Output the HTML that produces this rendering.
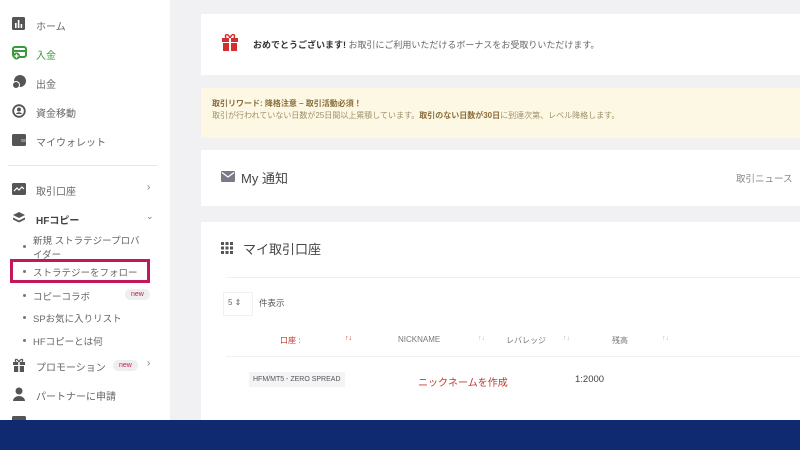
<!DOCTYPE html>
<html><head><meta charset="utf-8"><style>
*{margin:0;padding:0;box-sizing:border-box}
body{width:800px;height:450px;overflow:hidden;background:#f1f1f3;font-family:"Liberation Sans","Noto Sans CJK JP",sans-serif;position:relative;color:#555}
.a{position:absolute;white-space:nowrap}
#side{position:absolute;left:0;top:0;width:170px;height:450px;background:#fff}
.it{position:absolute;left:36px;font-size:10px;color:#666}
.ic{position:absolute;left:12px}
.sub{position:absolute;left:33px;font-size:9.5px;color:#666}
.dot{position:absolute;left:23px;width:3px;height:3px;border-radius:50%;background:#777}
.card{position:absolute;left:201px;right:0;background:#fff}
.badge{position:absolute;font-size:7px;color:#c2185b;background:#eee;border-radius:7px;padding:2px 6px}
.th{position:absolute;top:335px;font-size:8px;color:#777}
.ar{position:absolute;top:335px;font-size:7px;color:#bbb}
</style></head><body>
<div id="side">
<svg class="ic" style="top:17px" width="13" height="13"><rect width="13" height="13" rx="1.5" fill="#555"/><rect x="3" y="6" width="1.6" height="5" fill="#fff"/><rect x="5.8" y="3" width="1.6" height="8" fill="#fff"/><rect x="8.6" y="7" width="1.6" height="4" fill="#fff"/></svg>
<div class="it" style="top:18px">ホーム</div>
<svg class="ic" style="top:46px" width="15" height="14"><rect x="1" y="1" width="13" height="10" rx="2" fill="none" stroke="#3a9a3a" stroke-width="2"/><rect x="1" y="4" width="13" height="2" fill="#3a9a3a"/><circle cx="4.5" cy="10" r="3.5" fill="#3a9a3a"/><path d="M4.5 8v4M2.5 10h4" stroke="#fff" stroke-width="1.2"/></svg>
<div class="it" style="top:47px;color:#3a9a3a">入金</div>
<svg class="ic" style="top:75px" width="14" height="14"><circle cx="8" cy="6" r="6" fill="#555"/><circle cx="4" cy="10" r="3.5" fill="#555" stroke="#fff" stroke-width="1"/></svg>
<div class="it" style="top:76px">出金</div>
<svg class="ic" style="top:104px" width="14" height="14"><circle cx="7" cy="7" r="5.8" fill="none" stroke="#555" stroke-width="1.8"/><circle cx="7" cy="5.5" r="2" fill="#555"/><path d="M3.8 10a3.5 3 0 0 1 6.4 0z" fill="#555"/></svg>
<div class="it" style="top:105px">資金移動</div>
<svg class="ic" style="top:134px" width="14" height="12"><rect width="14" height="12" rx="1.5" fill="#555"/><rect x="9" y="5" width="5" height="3" fill="#888"/></svg>
<div class="it" style="top:134px">マイウォレット</div>
<div class="a" style="left:8px;top:165px;width:149px;height:1px;background:#e6e6e6"></div>
<svg class="ic" style="top:183px" width="14" height="12"><rect width="14" height="12" rx="1.5" fill="#555"/><path d="M2 8l3-3 2 2 3-3 2 2" stroke="#fff" stroke-width="1.2" fill="none"/></svg>
<div class="it" style="top:183px">取引口座</div><div class="a" style="left:147px;top:182px;font-size:10px;color:#777">›</div>
<svg class="ic" style="top:211px" width="14" height="13"><path d="M7 1L13 4 7 7 1 4z" fill="#555"/><path d="M1 6.5L7 9.5 13 6.5 13 8.5 7 11.5 1 8.5z" fill="#555"/></svg>
<div class="it" style="top:212px;font-weight:bold;color:#444">HFコピー</div><div class="a" style="left:146px;top:211px;font-size:9px;color:#777">⌄</div>
<div class="dot" style="top:245px"></div><div class="sub" style="top:235px;line-height:14px;white-space:normal;width:115px">新規 ストラテジープロバイダー</div>
<div class="a" style="left:10px;top:259px;width:140px;height:24px;border:3px solid #c2185b"></div>
<div class="dot" style="top:270px"></div><div class="sub" style="top:265px">ストラテジーをフォロー</div>
<div class="dot" style="top:294px"></div><div class="sub" style="top:289px">コピーコラボ</div><div class="badge" style="left:125px;top:289px">new</div>
<div class="dot" style="top:316px"></div><div class="sub" style="top:311px">SPお気に入りリスト</div>
<div class="dot" style="top:339px"></div><div class="sub" style="top:334px">HFコピーとは何</div>
<svg class="ic" style="top:358px" width="14" height="14"><rect x="1" y="4" width="12" height="3" fill="#555"/><rect x="2" y="8" width="10" height="6" fill="#555"/><rect x="6.2" y="4" width="1.6" height="10" fill="#fff"/><path d="M7 4C5 0 2 1 4 4M7 4C9 0 12 1 10 4" stroke="#555" stroke-width="1.3" fill="none"/></svg>
<div class="it" style="top:359px">プロモーション</div><div class="badge" style="left:113px;top:360px">new</div><div class="a" style="left:147px;top:358px;font-size:10px;color:#777">›</div>
<svg class="ic" style="top:387px" width="14" height="14"><circle cx="7" cy="4" r="3.5" fill="#555"/><path d="M1 14a6 5 0 0 1 12 0z" fill="#555"/></svg>
<div class="it" style="top:388px">パートナーに申請</div>
<svg class="ic" style="top:416px" width="14" height="12"><rect width="14" height="12" rx="1.5" fill="#555"/></svg>
</div>
<div class="card" style="top:14px;height:61px">
<svg class="a" style="left:20px;top:19px" width="18" height="19"><rect x="1" y="5" width="16" height="4" fill="#d32f2f"/><rect x="2" y="10" width="14" height="8" fill="#d32f2f"/><rect x="8" y="5" width="2" height="13" fill="#fff"/><rect x="1" y="9" width="16" height="1" fill="#fff"/><path d="M9 5C7 0 3 1 5 5M9 5C11 0 15 1 13 5" stroke="#d32f2f" stroke-width="1.5" fill="none"/></svg>
<div class="a" style="left:52px;top:24px;font-size:9px;color:#666"><b style="color:#333">おめでとうございます!</b> お取引にご利用いただけるボーナスをお受取りいただけます。</div>
</div>
<div class="a" style="left:201px;right:0;top:88px;height:50px;background:#fcf8e3"></div>
<div class="a" style="left:212px;top:98px;font-size:8px;color:#8a6d3b;font-weight:bold">取引リワード: 降格注意 – 取引活動必須！</div>
<div class="a" style="left:212px;top:110px;font-size:8px;color:#a08f6b">取引が行われていない日数が25日間以上累積しています。<b style="color:#8a6d3b">取引のない日数が30日</b>に到達次第、レベル降格します。</div>
<div class="card" style="top:150px;height:56px">
<svg class="a" style="left:20px;top:21px" width="14" height="11"><rect width="14" height="11" rx="1" fill="#7a7a8a"/><path d="M1 1.5l6 4.5 6-4.5" stroke="#fff" stroke-width="1.2" fill="none"/></svg>
<div class="a" style="left:40px;top:18px;font-size:13px;color:#444">My 通知</div>
<div class="a" style="left:535px;top:21px;font-size:9.5px;color:#888">取引ニュース</div>
</div>
<div class="card" style="top:222px;height:200px">
<svg class="a" style="left:20px;top:20px" width="12" height="12"><g fill="#555"><rect x="0" y="0" width="3" height="3"/><rect x="4.5" y="0" width="3" height="3"/><rect x="9" y="0" width="3" height="3"/><rect x="0" y="4.5" width="3" height="3"/><rect x="4.5" y="4.5" width="3" height="3"/><rect x="9" y="4.5" width="3" height="3"/><rect x="0" y="9" width="3" height="3"/><rect x="4.5" y="9" width="3" height="3"/><rect x="9" y="9" width="3" height="3"/></g></svg>
<div class="a" style="left:42px;top:17px;font-size:13px;color:#444">マイ取引口座</div>
<div class="a" style="left:25px;top:55px;right:0;height:1px;background:#f0f0f0"></div>
<div class="a" style="left:22px;top:70px;width:30px;height:24px;border:1px solid #f0f0f0"></div>
<div class="a" style="left:27px;top:76px;font-size:8px;color:#666">5 ⇕</div>
<div class="a" style="left:58px;top:75px;font-size:8.5px;color:#555">件表示</div>
<div class="a" style="left:25px;top:134px;right:0;height:1px;background:#f0f0f0"></div>
<div class="a" style="left:48px;top:150px;font-size:7px;color:#555;background:#f4f4f6;padding:4px 4px">HFM/MT5 - ZERO SPREAD</div>
<div class="a" style="left:217px;top:152px;font-size:10px;color:#c0392b">ニックネームを作成</div>
<div class="a" style="left:374px;top:152px;font-size:9.5px;color:#444">1:2000</div>
</div>
<div class="th" style="left:280px;color:#c0392b">口座 :</div><div class="ar" style="left:345px;color:#c0392b">↑↓</div>
<div class="th" style="left:398px">NICKNAME</div><div class="ar" style="left:478px">↑↓</div>
<div class="th" style="left:506px">レバレッジ</div><div class="ar" style="left:563px">↑↓</div>
<div class="th" style="left:612px">残高</div><div class="ar" style="left:662px">↑↓</div>
<div class="a" style="left:0;top:420px;width:800px;height:30px;background:#102a72"></div>
</body></html>
